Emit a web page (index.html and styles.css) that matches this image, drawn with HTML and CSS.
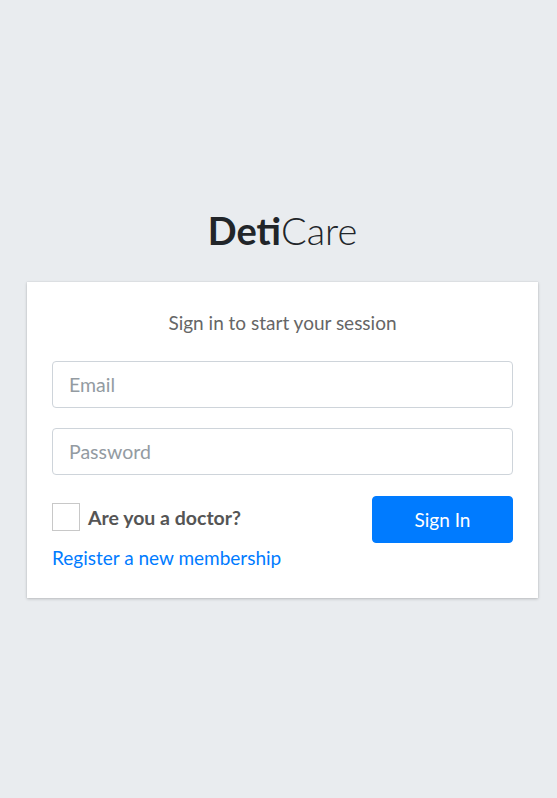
FILE: index.html
```html
<!DOCTYPE html>
<html>
<head>
<meta charset="utf-8">
<link rel="stylesheet" href="styles.css">
</head>
<body>
<div class="login-box">
  <div class="login-logo"><b>Deti</b>Care</div>
  <div class="card">
    <p class="msg">Sign in to start your session</p>
    <form class="form">
      <input class="field" type="email" placeholder="Email">
      <input class="field" type="password" placeholder="Password">
      <div class="row">
        <div class="left">
          <label class="check"><span class="box"></span><span class="check-label">Are you a doctor?</span></label>
          <a class="link" href="#">Register a new membership</a>
        </div>
        <button class="btn" type="button">Sign In</button>
      </div>
    </form>
  </div>
</div>
</body>
</html>
```
FILE: styles.css
```css
html, body {
  margin: 0;
  padding: 0;
}
body {
  background: #e9ecef;
  font-family: Lato, "Noto Sans", sans-serif;
  height: 798px;
  display: flex;
  flex-direction: column;
  align-items: flex-start;
  justify-content: center;
  color: #212529;
}
.login-box {
  width: 511px;
  margin-left: 27px;
  margin-top: 8px;
}
.login-logo {
  text-align: center;
  font-size: 38px;
  font-weight: 300;
  color: #212529;
  line-height: 1.2;
  margin-bottom: 29px;
}
.login-logo b {
  font-weight: 700;
}
.card {
  background: #fff;
  box-shadow: 0 0 1px rgba(0,0,0,.125), 0 1px 3px rgba(0,0,0,.2);
  padding: 28px 25px 29px;
}
.msg {
  margin: 0 0 25px;
  text-align: center;
  color: #666;
  font-size: 19px;
  line-height: 26px;
}
.form {
  display: flex;
  flex-direction: column;
  gap: 20px;
}
.field {
  box-sizing: border-box;
  height: 47px;
  width: 100%;
  border: 1px solid #ced4da;
  border-radius: 4px;
  padding: 0 16px;
  font-family: inherit;
  font-size: 19.5px;
  color: #495057;
  outline: none;
}
.field::placeholder {
  color: #939ba2;
}
.row {
  display: flex;
  justify-content: space-between;
  align-items: flex-start;
  margin-top: 1px;
}
.left {
  display: flex;
  flex-direction: column;
  gap: 15px;
  padding-top: 7px;
}
.check {
  display: flex;
  align-items: center;
  gap: 8px;
}
.box {
  width: 26px;
  height: 26px;
  border: 1px solid #c8c8c8;
  background: #fff;
}
.check-label {
  font-weight: 700;
  font-size: 19.5px;
  color: #555;
}
.link {
  color: #007bff;
  text-decoration: none;
  font-size: 19px;
}
.btn {
  width: 141px;
  height: 47px;
  background: #007bff;
  border: 1px solid #007bff;
  border-radius: 4px;
  color: #fff;
  font-family: inherit;
  font-size: 19px;
}
```
